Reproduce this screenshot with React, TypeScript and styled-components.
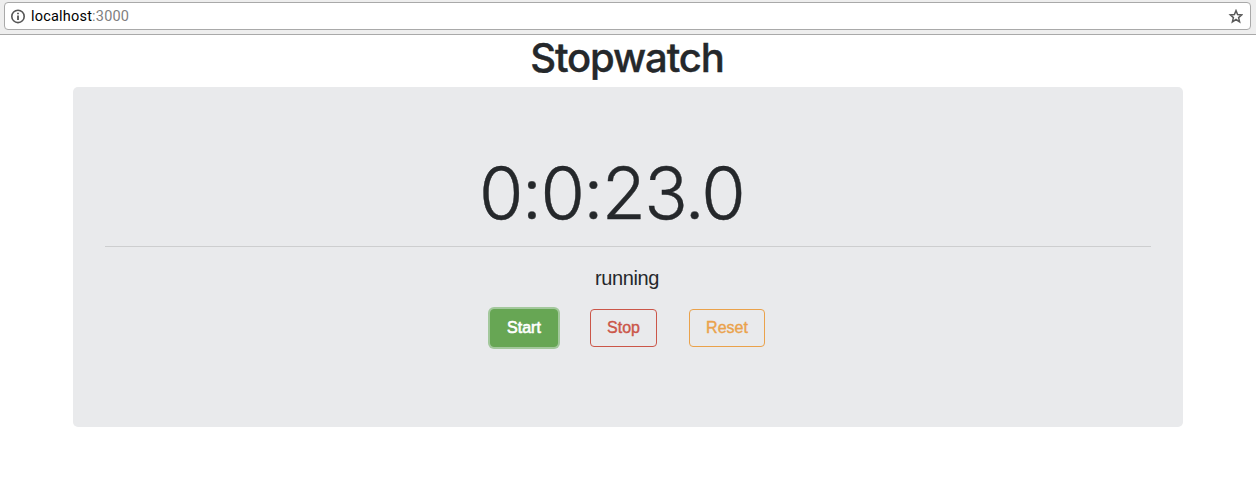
import React from "react";
import styled, { createGlobalStyle } from "styled-components";

const GlobalStyle = createGlobalStyle`
  * { box-sizing: border-box; }
  body { margin: 0; background: #fff; color: #25282b; font-family: Inter, "Liberation Sans", sans-serif; }
`;

const Toolbar = styled.header`
  height: 35px;
  padding: 2px 5px 0 4px;
  background: #eeeeee;
  border-bottom: 1px solid #a9a9a9;
`;

const AddressBar = styled.div`
  display: flex;
  align-items: center;
  height: 28px;
  padding: 0 7px 0 6px;
  background: #fff;
  border: 1px solid #a9a9a9;
  border-radius: 4px;
`;

const Address = styled.span`
  flex: 1;
  margin-left: 5px;
  padding-top: 2px;
  font: 14.5px/20px Roboto, sans-serif;
  letter-spacing: 0.2px;
  color: #000;
`;

const Port = styled.span`
  color: #7f7f7f;
`;

const Container = styled.main`
  width: 1110px;
  margin: 0 auto;
  text-align: center;
`;

const Title = styled.h1`
  margin: 0;
  padding: 1px 2px 7px 0;
  font-size: 40px;
  line-height: 44px;
  font-weight: 500;
  letter-spacing: -1.1px;
  -webkit-text-stroke: 0.4px currentColor;
`;

const Panel = styled.section`
  height: 340px;
  padding: 64px 32px;
  background: #e9eaec;
  border-radius: 5px;
`;

const Time = styled.div`
  height: 79px;
  padding-right: 33px;
  font-size: 72px;
  line-height: 84px;
  font-weight: 300;
  letter-spacing: -1.75px;
  -webkit-text-stroke: 0.4px currentColor;
`;

const Divider = styled.hr`
  height: 1px;
  margin: 16px 0;
  border: 0;
  background: #cdcecf;
`;

const Status = styled.p`
  margin: 0 0 16px;
  padding-right: 2px;
  font: 20px/30px "Liberation Sans", sans-serif;
  letter-spacing: -0.4px;
`;

const Actions = styled.div`
  display: flex;
  justify-content: center;
  gap: 32px;
  padding-right: 2px;
`;

const Button = styled.button<{ $color: string; $width: number; $active?: boolean }>`
  width: ${(p) => p.$width}px;
  height: 38px;
  padding: 0 0 0 1px;
  border: 1px solid ${(p) => p.$color};
  border-radius: 4px;
  background: ${(p) => (p.$active ? p.$color : "transparent")};
  color: ${(p) => (p.$active ? "#fff" : p.$color)};
  box-shadow: ${(p) => (p.$active ? "0 0 0 2px #a3c89c" : "none")};
  font: 16px/24px "Liberation Sans", sans-serif;
  -webkit-text-stroke: ${(p) => (p.$active ? 0.6 : 0.4)}px currentColor;
`;

const InfoIcon = () => (
  <svg width="15" height="15" viewBox="0 0 15 15" fill="none">
    <circle cx="7" cy="7.4" r="6.2" stroke="#555" strokeWidth="1.6" />
    <path d="M7 6.4V11M7 3.7V5.3" stroke="#555" strokeWidth="1.8" />
  </svg>
);

const StarIcon = () => (
  <svg width="15" height="15" viewBox="0 0 15 15" fill="none">
    <path
      d="M8 1.6 9.6 5.5 13.7 5.9 10.6 8.6 11.6 12.8 8 10.5 4.4 12.8 5.4 8.6 2.3 5.9 6.4 5.5Z"
      stroke="#5a5a5a"
      strokeWidth="1.5"
    />
  </svg>
);

export default function App() {
  return (
    <>
      <GlobalStyle />
      <Toolbar>
        <AddressBar>
          <InfoIcon />
          <Address>localhost<Port>:3000</Port></Address>
          <StarIcon />
        </AddressBar>
      </Toolbar>
      <Container>
        <Title>Stopwatch</Title>
        <Panel>
          <Time>0:0:23.0</Time>
          <Divider />
          <Status>running</Status>
          <Actions>
            <Button $color="#67a654" $width={68} $active>Start</Button>
            <Button $color="#cb5649" $width={67}>Stop</Button>
            <Button $color="#eaa24b" $width={76}>Reset</Button>
          </Actions>
        </Panel>
      </Container>
    </>
  );
}
